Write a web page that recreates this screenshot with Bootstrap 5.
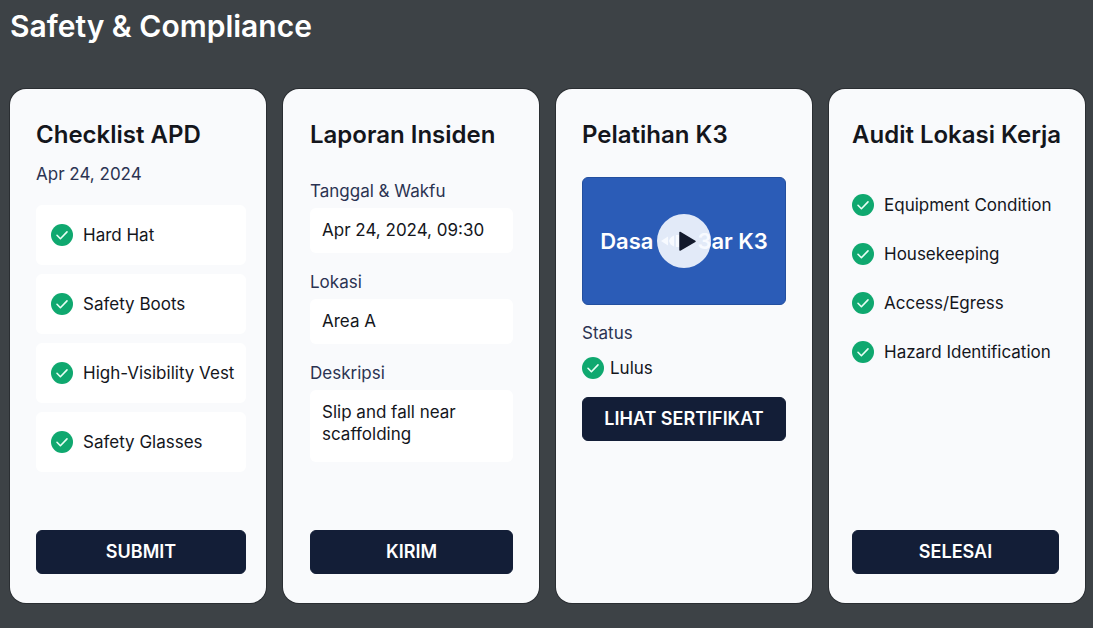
<!DOCTYPE html>
<html lang="id">
<head>
<meta charset="utf-8">
<meta name="viewport" content="width=device-width, initial-scale=1">
<title>Safety &amp; Compliance</title>
<link href="https://cdn.jsdelivr.net/npm/bootstrap@5.3.0/dist/css/bootstrap.min.css" rel="stylesheet">
<style>
  body { background: #3d4246; color: #14161c; font-family: Inter, "Liberation Sans", sans-serif; font-size: 17px; line-height: 24px; }
  .page { padding: 8px 8px 25px 10px; }
  .page-title { color: #fff; font-size: 30px; line-height: 37px; font-weight: 600; margin-bottom: 44px; }
  .board { gap: 17px; grid-template-columns: 1fr; }
  @media (min-width: 576px) { .board { grid-template-columns: repeat(2, minmax(0, 1fr)); } }
  @media (min-width: 992px) { .board { grid-template-columns: repeat(4, minmax(0, 1fr)); } }
  .panel { background: #f9fafc; border-radius: 16px; padding: 28px 26px 29px; box-shadow: 0 0 0 1px rgba(20, 22, 26, .45); }
  .panel-checklist { padding-right: 20px; }
  .panel-report { padding-left: 27px; }
  .panel-audit { padding-left: 23px; }
  .panel-title { font-size: 24px; line-height: 36px; font-weight: 600; margin: 0; white-space: nowrap; }
  .muted { color: #2b3352; }
  .date { margin: 9px 0 19px; }
  .tile { background: #fff; border-radius: 6px; height: 60px; padding: 0 0 0 15px; gap: 10px; }
  .tiles { gap: 9px; margin-bottom: 24px; }
  .tick.form-check-input { width: 22px; height: 22px; margin: 0; border: 0; border-radius: 50%; flex: none; background-color: #c9d0dc; }
  .tick.form-check-input:checked { background-color: #0fa86f; background-size: 100% 100%;
    background-image: url("data:image/svg+xml,%3Csvg xmlns='http://www.w3.org/2000/svg' viewBox='0 0 22 22'%3E%3Cpath fill='none' stroke='%23e9fff5' stroke-width='1.6' stroke-linecap='round' stroke-linejoin='round' d='M6 11.3l3.400 3.400 6.600-6.800'/%3E%3C/svg%3E"); }
  .fields { gap: 17px; margin: 26px 0 24px; }
  .fields label { display: block; margin-bottom: 5px; }
  .fields .form-control { background: #fff; border: 0; border-radius: 6px; color: inherit; font-size: 17px; line-height: 22px; padding: 11px 12px 12px; resize: none; }
  .fields input.form-control { height: 45px; }
  .fields textarea.form-control { height: 72px; }
  .action.btn { --bs-btn-color: #fff; --bs-btn-bg: #131e37; --bs-btn-border-color: #131e37; --bs-btn-hover-color: #fff; --bs-btn-hover-bg: #1d2b4c;
    --bs-btn-border-radius: 6px; --bs-btn-padding-x: 0; height: 44px; font-size: 18px; line-height: 24px; font-weight: 600; white-space: nowrap; }
  .video { background: #2b5cb7; border: 1px solid #234f9f; border-radius: 6px; height: 128px; margin: 24px 0 16px; color: #fff; font-size: 22px; font-weight: 600; white-space: nowrap; }
  .video .rewind { margin: 0 8px; }
  .play { width: 54px; height: 54px; border: 0; padding: 0; border-radius: 50%; background: rgba(246, 250, 255, .9); }
  .status-row { gap: 6px; margin: 11px 0 17px; }
  .audit { gap: 25px; margin: 40px 0 24px; }
  .audit label { gap: 10px; }
</style>
</head>
<body>
<main class="page min-vh-100 d-flex flex-column">
  <h1 class="page-title">Safety &amp; Compliance</h1>
  <div class="board d-grid flex-grow-1">

    <form class="panel panel-checklist d-flex flex-column">
      <h2 class="panel-title">Checklist APD</h2>
      <p class="date muted">Apr 24, 2024</p>
      <div class="tiles d-flex flex-column">
        <label class="tile d-flex align-items-center"><input class="form-check-input tick" type="checkbox" checked>Hard Hat</label>
        <label class="tile d-flex align-items-center"><input class="form-check-input tick" type="checkbox" checked>Safety Boots</label>
        <label class="tile d-flex align-items-center text-nowrap"><input class="form-check-input tick" type="checkbox" checked>High-Visibility Vest</label>
        <label class="tile d-flex align-items-center"><input class="form-check-input tick" type="checkbox" checked>Safety Glasses</label>
      </div>
      <button type="button" class="btn action w-100 mt-auto">SUBMIT</button>
    </form>

    <form class="panel panel-report d-flex flex-column">
      <h2 class="panel-title">Laporan Insiden</h2>
      <div class="fields d-flex flex-column">
        <div>
          <label class="muted" for="tanggal">Tanggal &amp; Wakfu</label>
          <input class="form-control" id="tanggal" type="text" value="Apr 24, 2024, 09:30">
        </div>
        <div>
          <label class="muted" for="lokasi">Lokasi</label>
          <input class="form-control" id="lokasi" type="text" value="Area A">
        </div>
        <div>
          <label class="muted" for="deskripsi">Deskripsi</label>
          <textarea class="form-control" id="deskripsi">Slip and fall near scaffolding</textarea>
        </div>
      </div>
      <button type="button" class="btn action w-100 mt-auto">KIRIM</button>
    </form>

    <section class="panel d-flex flex-column">
      <h2 class="panel-title">Pelatihan K3</h2>
      <div class="video position-relative d-flex align-items-center justify-content-center">
        <span>Dasa</span>
        <svg class="rewind" width="28" height="14" viewBox="0 0 28 14" fill="#fff" aria-hidden="true"><path d="M0 7l7-4.500v9zM8 7q1-4 5-5.500v11Q9 11 8 7zM15 1h3v12h-3z"/></svg>
        <span>3ar K3</span>
        <button type="button" class="play position-absolute top-50 start-50 translate-middle" aria-label="Putar video">
          <svg class="d-block" width="54" height="54" viewBox="0 0 54 54" aria-hidden="true"><path fill="#131a2c" stroke="#131a2c" stroke-width="1.500" stroke-linejoin="round" d="M23 18.500v17.500l15-8.700z"/></svg>
        </button>
      </div>
      <div class="muted">Status</div>
      <div class="status-row d-flex align-items-center">
        <svg width="22" height="22" viewBox="0 0 22 22" aria-hidden="true"><circle cx="11" cy="11" r="11" fill="#0fa86f"/><path fill="none" stroke="#e9fff5" stroke-width="1.600" stroke-linecap="round" stroke-linejoin="round" d="M6 11.300l3.400 3.400 6.600-6.800"/></svg>
        <span>Lulus</span>
      </div>
      <button type="button" class="btn action w-100">LIHAT SERTIFIKAT</button>
    </section>

    <form class="panel panel-audit d-flex flex-column">
      <h2 class="panel-title">Audit Lokasi Kerja</h2>
      <div class="audit d-flex flex-column">
        <label class="d-flex align-items-center text-nowrap"><input class="form-check-input tick" type="checkbox" checked>Equipment Condition</label>
        <label class="d-flex align-items-center text-nowrap"><input class="form-check-input tick" type="checkbox" checked>Housekeeping</label>
        <label class="d-flex align-items-center text-nowrap"><input class="form-check-input tick" type="checkbox" checked>Access/Egress</label>
        <label class="d-flex align-items-center text-nowrap"><input class="form-check-input tick" type="checkbox" checked>Hazard Identification</label>
      </div>
      <button type="button" class="btn action w-100 mt-auto">SELESAI</button>
    </form>

  </div>
</main>
<script src="https://cdn.jsdelivr.net/npm/bootstrap@5.3.0/dist/js/bootstrap.bundle.min.js"></script>
</body>
</html>
